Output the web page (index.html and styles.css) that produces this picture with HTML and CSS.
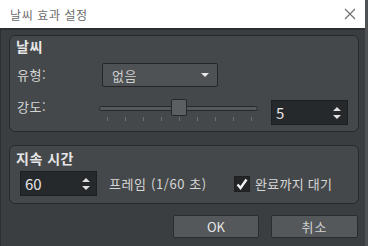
FILE: index.html
```html
<!DOCTYPE html>
<html lang="ko">
<head>
    <meta charset="UTF-8">
    <title>날씨 효과 설정</title>
    <link rel="stylesheet" href="styles.css">
</head>
<body>
    <div class="titlebar">
        <span class="title">날씨 효과 설정</span>
        <svg class="close" width="12" height="12" viewBox="0 0 12 12">
            <path d="M1 1L11 11M11 1L1 11" stroke="#6e6e6e" stroke-width="1.1" fill="none"/>
        </svg>
    </div>

    <div class="dialog">
        <div class="group weather">
            <div class="legend">날씨</div>

            <div class="row type-row">
                <span class="label">유형:</span>
                <div class="select">
                    <span>없음</span>
                    <span class="caret"></span>
                </div>
            </div>

            <div class="row power-row">
                <span class="label">강도:</span>
                <div class="slider">
                    <div class="track"></div>
                    <div class="thumb"></div>
                    <div class="ticks">
                        <i></i><i></i><i></i><i></i><i></i><i></i><i></i><i></i><i></i>
                    </div>
                </div>
                <div class="spin power-spin">
                    <span>5</span>
                    <span class="arrows"><b class="up"></b><b class="down"></b></span>
                </div>
            </div>
        </div>

        <div class="group duration">
            <div class="legend">지속 시간</div>
            <div class="row frame-row">
                <div class="spin frame-spin">
                    <span>60</span>
                    <span class="arrows"><b class="up"></b><b class="down"></b></span>
                </div>
                <span class="unit">프레임 (1/60 초)</span>
                <label class="check">
                    <span class="box">
                        <svg width="14" height="14" viewBox="0 0 14 14">
                            <path d="M2.5 7.5L5.5 11L11.5 2.5" stroke="#f2f2f2" stroke-width="2.4" fill="none"/>
                        </svg>
                    </span>
                    완료까지 대기
                </label>
            </div>
        </div>

        <div class="buttons">
            <button class="ok">OK</button>
            <button class="cancel">취소</button>
        </div>
    </div>
</body>
</html>
```

FILE: styles.css
```css
html, body {
    margin: 0;
    padding: 0;
}
body {
    width: 368px;
    height: 246px;
    overflow: hidden;
    font-family: "Noto Sans CJK KR", "Noto Sans", sans-serif;
    font-size: 13px;
    color: #dedede;
    background: #4f5255;
}
.titlebar {
    height: 28px;
    width: 365px;
    background: #fff;
    display: flex;
    align-items: center;
    justify-content: space-between;
    box-sizing: border-box;
    padding: 0 9px 0 10px;
}
.title {
    font-size: 12px;
    letter-spacing: 0.6px;
    color: #6a6a6a;
}
.dialog {
    width: 365px;
    height: 218px;
    box-sizing: border-box;
    background: #3b3e41;
    border-top: 2px solid #2c2e31;
    border-left: 1px solid #2c2e31;
    padding: 5px 0 0 8px;
}
.group {
    width: 350px;
    box-sizing: border-box;
    background: #45484b;
    border: 1px solid #27292b;
    border-radius: 6px;
    padding: 0 10px 0 7px;
}
.legend {
    font-size: 14px;
    font-weight: bold;
    line-height: 18px;
    letter-spacing: 0.5px;
    color: #e6e6e6;
    margin-left: -1px;
}
.weather {
    height: 97px;
    padding-top: 1px;
}
.row {
    display: flex;
}
.label {
    width: 85px;
    line-height: 16px;
    letter-spacing: 0.5px;
    color: #d6d6d6;
}
.type-row {
    margin-top: 8px;
    align-items: center;
}
.select {
    width: 116px;
    height: 24px;
    box-sizing: border-box;
    border: 1px solid #242628;
    border-radius: 2px;
    background: #4e5255;
    display: flex;
    align-items: center;
    justify-content: space-between;
    padding: 0 8px 0 9px;
    color: #cfcfcf;
    letter-spacing: 0.5px;
}
.caret {
    width: 0;
    height: 0;
    border-left: 4px solid transparent;
    border-right: 4px solid transparent;
    border-top: 4px solid #e8e8e8;
}
.power-row {
    margin-top: 12px;
    align-items: flex-start;
}
.slider {
    position: relative;
    width: 159px;
    height: 22px;
    margin-left: -3px;
}
.track {
    position: absolute;
    left: 0;
    right: 0;
    top: 7px;
    height: 5px;
    box-sizing: border-box;
    border: 1px solid #26282a;
    border-radius: 3px;
    background: #55595c;
}
.thumb {
    position: absolute;
    left: 72px;
    top: 0;
    width: 16px;
    height: 17px;
    box-sizing: border-box;
    border: 1px solid #26282a;
    border-radius: 2px;
    background: #5b5f62;
}
.ticks {
    position: absolute;
    left: 0;
    right: 0;
    top: 18px;
    display: flex;
    justify-content: space-between;
    padding: 0 6px 0 8px;
}
.ticks i {
    width: 1px;
    height: 4px;
    background: #6c7073;
}
.spin {
    width: 77px;
    height: 25px;
    box-sizing: border-box;
    border: 1px solid #1d1f21;
    background: #26292b;
    display: flex;
    align-items: center;
    justify-content: space-between;
    padding: 0 6px 0 4px;
    font-size: 15px;
    color: #e4e4e4;
}
.power-spin {
    margin-left: 13px;
    margin-top: 1px;
}
.arrows {
    display: flex;
    flex-direction: column;
    gap: 4px;
}
.arrows b {
    width: 0;
    height: 0;
    border-left: 4px solid transparent;
    border-right: 4px solid transparent;
}
.arrows .up {
    border-bottom: 4px solid #e0e0e0;
}
.arrows .down {
    border-top: 4px solid #e0e0e0;
}
.duration {
    height: 59px;
    margin-top: 13px;
    padding-top: 3px;
}
.frame-row {
    margin-top: 4px;
    align-items: center;
}
.frame-spin {
    margin-left: 3px;
}
.unit {
    margin-left: 12px;
    letter-spacing: 0.6px;
    color: #d6d6d6;
}
.check {
    display: flex;
    align-items: center;
    margin-left: 27px;
    letter-spacing: 0.3px;
    color: #d6d6d6;
}
.box {
    width: 16px;
    height: 16px;
    box-sizing: border-box;
    border: 1px solid #1d1f21;
    background: #232527;
    display: flex;
    align-items: center;
    justify-content: center;
    margin-right: 5px;
}
.buttons {
    display: flex;
    gap: 12px;
    margin: 11px 0 0 164px;
}
button {
    height: 23px;
    box-sizing: border-box;
    border: 1px solid #2a2c2e;
    border-radius: 2px;
    background: #55585b;
    color: #e6e6e6;
    font-family: "Noto Sans CJK KR", "Noto Sans", sans-serif;
    font-size: 13px;
    padding: 0;
}
.ok {
    width: 86px;
}
.cancel {
    width: 87px;
    color: #cfcfcf;
    letter-spacing: 1px;
}
```
